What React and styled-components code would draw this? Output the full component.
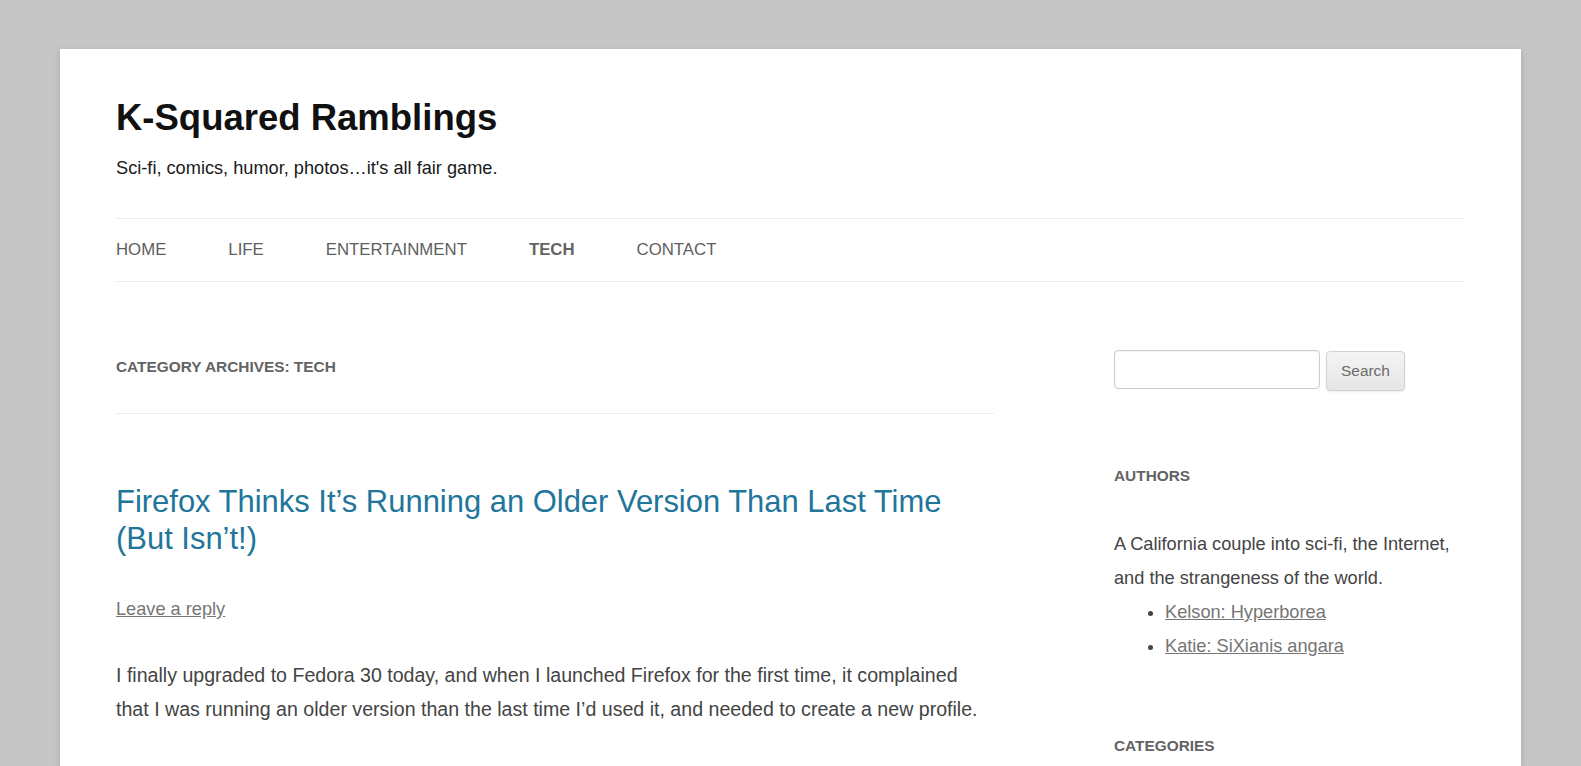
import styled, { createGlobalStyle } from "styled-components";

const Global = createGlobalStyle`
  html, body {
    margin: 0;
    padding: 0;
  }
  body {
    background: #c6c6c6;
    font-family: "Liberation Sans", Arial, sans-serif;
    color: #444;
  }
  * {
    box-sizing: border-box;
  }
`;

const Page = styled.div`
  margin: 49px 60px 0;
  min-height: calc(100vh - 49px);
  background: #fff;
  padding: 0 57px 0 56px;
  box-shadow: 0 2px 6px rgba(100, 100, 100, 0.3);
`;

const Header = styled.header`
  padding-top: 47px;
`;

const SiteTitle = styled.h1`
  margin: 0;
  font-size: 36.5px;
  line-height: 43px;
  font-weight: bold;
  color: #111;
`;

const Tagline = styled.h2`
  margin: 17px 0 0;
  font-size: 18.2px;
  line-height: 24px;
  font-weight: normal;
  color: #1a1a1a;
`;

const Nav = styled.nav`
  margin-top: 38px;
  border-top: 1px solid #ededed;
  border-bottom: 1px solid #ededed;
`;

const NavList = styled.ul`
  display: flex;
  gap: 62px;
  margin: 0;
  padding: 0;
  list-style: none;
`;

const NavItem = styled.li`
  font-size: 16.8px;
  line-height: 62px;
  text-transform: uppercase;
  color: ${(p) => (p.$current ? "#636363" : "#5e5e5e")};
  font-weight: ${(p) => (p.$current ? "bold" : "normal")};
`;

const Main = styled.div`
  display: flex;
  justify-content: space-between;
  align-items: flex-start;
`;

const Content = styled.main`
  width: 878px;
`;

const ArchiveHeader = styled.h1`
  margin: 75px 0 0;
  padding-bottom: 36px;
  border-bottom: 1px solid #ededed;
  font-size: 15.4px;
  line-height: 20px;
  font-weight: bold;
  text-transform: uppercase;
  color: #636363;
`;

const PostTitle = styled.h2`
  margin: 69px 0 0;
  font-size: 30.95px;
  line-height: 37px;
  font-weight: normal;
  color: #21759b;
`;

const ReplyLink = styled.a`
  display: block;
  margin-top: 40px;
  font-size: 18.2px;
  line-height: 24px;
  color: #757575;
  text-decoration: underline;
`;

const Paragraph = styled.p`
  margin: 37px 0 0;
  font-size: 19.6px;
  line-height: 34.3px;
  color: #444;
`;

const Sidebar = styled.aside`
  width: 350px;
  padding-top: 68px;
`;

const SearchForm = styled.form`
  display: flex;
  align-items: flex-start;
  gap: 6px;
`;

const SearchInput = styled.input`
  width: 206px;
  height: 39px;
  border: 1px solid #ccc;
  border-radius: 4px;
  box-shadow: inset 0 1px 2px rgba(0, 0, 0, 0.05);
  font-family: inherit;
  font-size: 16px;
  padding: 0 8px;
`;

const SearchButton = styled.button`
  margin-top: 1px;
  width: 79px;
  height: 40px;
  border: 1px solid #d2d2d2;
  border-radius: 4px;
  background: linear-gradient(#f4f4f4, #e6e6e6);
  box-shadow: 0 1px 2px rgba(64, 64, 64, 0.1);
  font-family: inherit;
  font-size: 15.4px;
  color: #6a6a6a;
`;

const WidgetTitle = styled.h3`
  margin: ${(p) => p.$top}px 0 0;
  font-size: 15.4px;
  line-height: 20px;
  font-weight: bold;
  text-transform: uppercase;
  color: #636363;
`;

const WidgetText = styled.p`
  margin: 41px 0 0;
  font-size: 18.2px;
  line-height: 34px;
  color: #444;
`;

const AuthorList = styled.ul`
  margin: 0;
  padding-left: 51px;
  list-style: disc;
  font-size: 18.2px;
  line-height: 34px;
  color: #444;
`;

const AuthorLink = styled.a`
  color: #757575;
  text-decoration: underline;
`;

const navItems = ["Home", "Life", "Entertainment", "Tech", "Contact"];

export default function App() {
  return (
    <>
      <Global />
      <Page>
        <Header>
          <SiteTitle>K-Squared Ramblings</SiteTitle>
          <Tagline>Sci-fi, comics, humor, photos…it's all fair game.</Tagline>
          <Nav>
            <NavList>
              {navItems.map((item) => (
                <NavItem key={item} $current={item === "Tech"}>
                  {item}
                </NavItem>
              ))}
            </NavList>
          </Nav>
        </Header>
        <Main>
          <Content>
            <ArchiveHeader>Category Archives: Tech</ArchiveHeader>
            <PostTitle>
              Firefox Thinks It’s Running an Older Version Than Last Time (But Isn’t!)
            </PostTitle>
            <ReplyLink>Leave a reply</ReplyLink>
            <Paragraph>
              I finally upgraded to Fedora 30 today, and when I launched Firefox for the first
              time, it complained that I was running an older version than the last time I’d used
              it, and needed to create a new profile.
            </Paragraph>
          </Content>
          <Sidebar>
            <SearchForm onSubmit={(e) => e.preventDefault()}>
              <SearchInput type="text" />
              <SearchButton type="submit">Search</SearchButton>
            </SearchForm>
            <WidgetTitle $top={75}>Authors</WidgetTitle>
            <WidgetText>
              A California couple into sci-fi, the Internet, and the strangeness of the world.
            </WidgetText>
            <AuthorList>
              <li>
                <AuthorLink>Kelson: Hyperborea</AuthorLink>
              </li>
              <li>
                <AuthorLink>Katie: SiXianis angara</AuthorLink>
              </li>
            </AuthorList>
            <WidgetTitle $top={73}>Categories</WidgetTitle>
          </Sidebar>
        </Main>
      </Page>
    </>
  );
}
